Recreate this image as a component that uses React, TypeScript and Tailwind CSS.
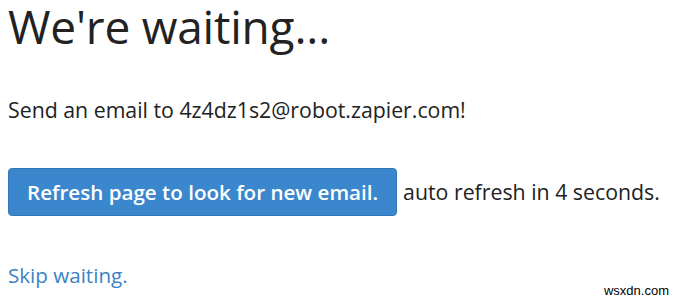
export default function App() {
  return (
    <div className="relative w-[680px] h-[304px] bg-white overflow-hidden font-['Open_Sans',sans-serif] text-[#222]">
      <div className="pl-2">
        <h1 className="text-[46px] leading-[52px] font-normal tracking-[-0.2px]">We're waiting...</h1>
        <p className="mt-[44px] text-[21.3px] leading-[28px]">Send an email to 4z4dz1s2@robot.zapier.com!</p>
        <div className="mt-[44px] flex items-center gap-[6px]">
          <button className="h-[48px] px-[18px] rounded-[4px] bg-[#3b87cd] border border-[#3277b8] text-white text-[20.6px] font-semibold">
            Refresh page to look for new email.
          </button>
          <span className="text-[21.3px]">auto refresh in 4 seconds.</span>
        </div>
        <a href="#" className="block mt-[44px] text-[20.6px] text-[#3b82c4]">Skip waiting.</a>
      </div>
      <span className="absolute right-[11px] bottom-[4px] text-[13px] text-black font-['Liberation_Sans',sans-serif]">wsxdn.com</span>
    </div>
  );
}
